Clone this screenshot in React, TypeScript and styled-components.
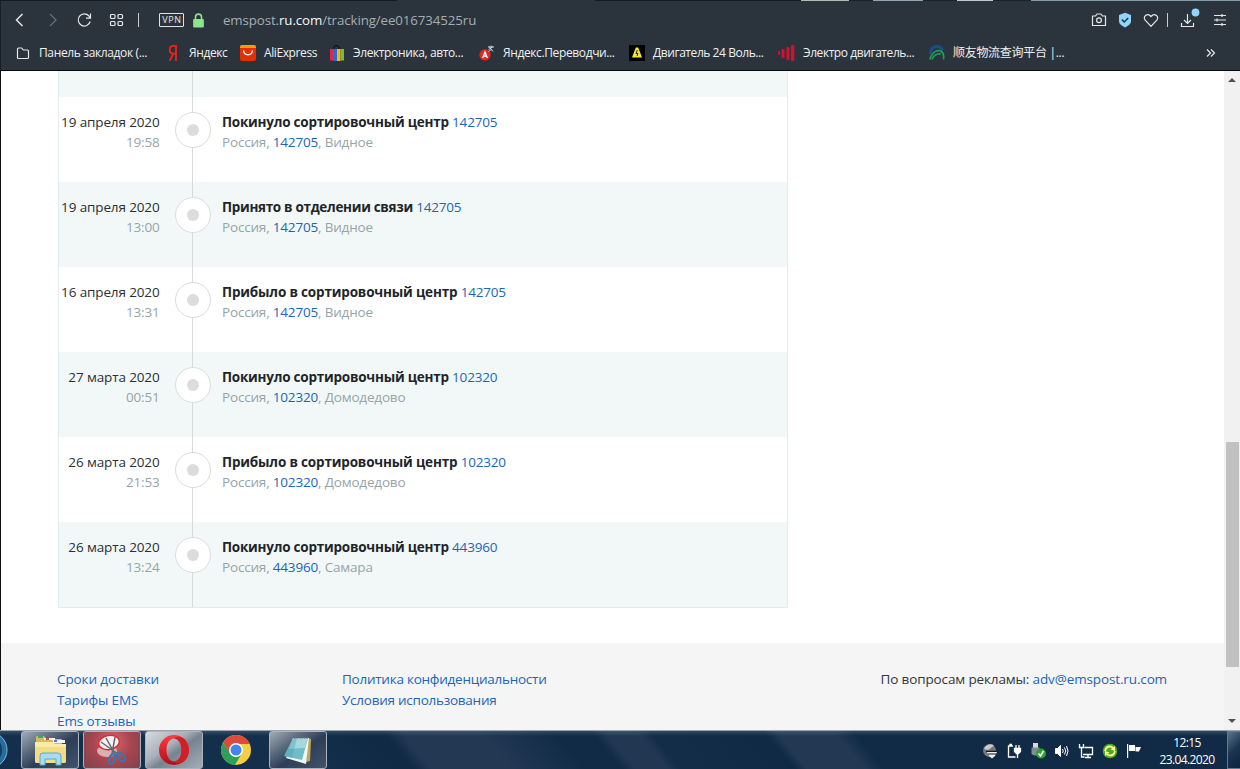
import React from 'react'
import styled, { createGlobalStyle } from 'styled-components'

const GlobalStyle = createGlobalStyle`
  * {
    box-sizing: border-box;
  }
  body {
    margin: 0;
    overflow: hidden;
    background: #fff;
  }
  svg {
    display: block;
    flex: none;
  }
`

const Screen = styled.div`
  width: 1240px;
  height: 769px;
  display: flex;
  flex-direction: column;
  overflow: hidden;
  font-family: 'Open Sans', 'Noto Sans', 'Noto Sans CJK SC', sans-serif;
`

/* ---------- browser chrome ---------- */

const Chrome = styled.header`
  height: 71px;
  flex: none;
  display: flex;
  flex-direction: column;
  background: #2b343c;
  border-left: 1px solid #171e25;
  border-bottom: 1px solid #07090b;
`

const TabEdge = styled.div`
  height: 1px;
  display: flex;
  background: #111a26;
`

const TabPiece = styled.span<{ w: number; color: string }>`
  width: ${({ w }) => w}px;
  background: ${({ color }) => color};
`

const Toolbar = styled.div`
  height: 38px;
  display: flex;
  align-items: center;
  padding: 0 12px 0 11px;
`

const NavButtons = styled.div`
  display: flex;
  align-items: center;
  width: 147px;
  gap: 16px;
`

const Vpn = styled.span`
  width: 25px;
  height: 14px;
  border: 1px solid #dfe3e6;
  border-radius: 1px;
  color: #e4e8ea;
  font-size: 9px;
  line-height: 12px;
  letter-spacing: 0.7px;
  text-align: center;
  padding-left: 1px;
`

const Address = styled.div`
  flex: 1;
  display: flex;
  align-items: center;
  gap: 18px;
  padding-left: 8px;
  font-size: 13.3px;
  line-height: 20px;
  letter-spacing: -0.1px;
  color: #a5adb3;
  white-space: nowrap;
  b {
    font-weight: 500;
    color: #f6f8f9;
  }
`

const Tools = styled.div`
  display: flex;
  align-items: center;
`

const Tool = styled.span<{ w: number }>`
  width: ${({ w }) => w}px;
  display: flex;
`

const Separator = styled.span`
  width: 1px;
  height: 14px;
  background: #c8cdd1;
`

const NavSeparator = styled(Separator)`
  margin-left: -2px;
`

const Bookmarks = styled.div`
  height: 28px;
  display: flex;
  align-items: center;
  padding-left: 14px;
`

const Bookmark = styled.div<{ w: number }>`
  width: ${({ w }) => w}px;
  display: flex;
  align-items: center;
  gap: 8px;
`

const BookmarkText = styled.span<{ spacing: number }>`
  font-size: 12px;
  line-height: 18px;
  letter-spacing: ${({ spacing }) => spacing}px;
  color: #eef1f3;
  white-space: nowrap;
`

/* ---------- page ---------- */

const Viewport = styled.div`
  height: 659px;
  flex: none;
  display: flex;
  border-left: 1px solid #111;
  background: #fff;
`

const Page = styled.main`
  flex: 1;
  display: flex;
  flex-direction: column;
  overflow: hidden;
`

const Timeline = styled.section`
  width: 730px;
  margin: 0 0 35px 57px;
  border: 1px solid #e3ecec;
  border-top: 0;
`

const Row = styled.div<{ tinted: boolean; cut?: boolean }>`
  height: ${({ cut }) => (cut ? 26 : 85)}px;
  display: grid;
  grid-template-columns: 101px 62px 1fr;
  background: ${({ tinted }) => (tinted ? '#f2f8f8' : '#fff')};
`

const When = styled.div`
  padding: 15px 0.5px 0 0;
  text-align: right;
  font-size: 13.5px;
  line-height: 20px;
  letter-spacing: -0.13px;
  color: #2b2f33;
  white-space: nowrap;
`

const Time = styled.div`
  letter-spacing: -0.2px;
  color: #95a5a6;
`

const Track = styled.div`
  display: flex;
  flex-direction: column;
  align-items: center;
  padding: 0 3px;
  margin-right: -3px;
`

const Line = styled.span<{ h?: number }>`
  width: 1px;
  ${({ h }) => (h ? `height: ${h}px;` : 'flex: 1;')}
  margin-right: 1px;
  background: #d6dada;
`

const Ring = styled.span`
  width: 36px;
  height: 36px;
  flex: none;
  display: grid;
  place-items: center;
  border: 1px solid #dcdcdc;
  border-radius: 50%;
  background: #fff;
  &::after {
    content: '';
    width: 12px;
    height: 12px;
    border-radius: 50%;
    background: #dcdcdc;
  }
`

const Info = styled.div`
  padding-top: 15px;
  font-size: 13.5px;
  line-height: 20px;
  letter-spacing: -0.18px;
  color: #95a5a6;
  white-space: nowrap;
`

const Title = styled.div<{ spacing: number }>`
  color: #212529;
  b {
    font-weight: 700;
    letter-spacing: ${({ spacing }) => spacing}px;
  }
`

const A = styled.a`
  color: #1a66b8;
  text-decoration: none;
`

const Footer = styled.footer`
  flex: 1;
  display: flex;
  padding: 26px 57px 0 56px;
  background: #f5f5f5;
  font-size: 13.5px;
  line-height: 21px;
  color: #33373b;
  white-space: nowrap;
`

const FooterColumn = styled.div<{ w?: number; spacing: number }>`
  display: flex;
  flex-direction: column;
  letter-spacing: ${({ spacing }) => spacing}px;
  ${({ w }) => (w ? `width: ${w}px;` : 'margin-left: auto;')}
`

const Scrollbar = styled.div`
  width: 16px;
  display: flex;
  flex-direction: column;
  align-items: center;
  background: #f1f1f1;
  padding: 7px 0 7px;
`

const Arrow = styled.span<{ down?: boolean }>`
  border: 4px solid transparent;
  border-top-width: ${({ down }) => (down ? 4 : 0)}px;
  border-bottom-width: ${({ down }) => (down ? 0 : 4)}px;
  border-${({ down }) => (down ? 'top' : 'bottom')}-color: #505050;
`

const Thumb = styled.span`
  width: 13px;
  height: 225px;
  margin: 360px 0 auto 1px;
  background: #c1c1c1;
`

/* ---------- taskbar ---------- */

const Taskbar = styled.footer`
  height: 39px;
  flex: none;
  display: flex;
  border-top: 1px solid #9aa5b1;
  background:
    linear-gradient(180deg, rgba(255, 255, 255, 0.14), transparent 5px),
    linear-gradient(50deg, #132f4c 26%, #102944 32.5%, #233853 34% 40%, #112b47 46% 49%, #223852 50% 52.5%, #132d49 53.5%, #102944 62.5%, #233853 63.5% 68%, #112b46 69.5%);
`

const Orb = styled.span`
  width: 21px;
  overflow: hidden;
`

const TaskButton = styled.span<{ look: 'plain' | 'red' | 'active' | 'none' }>`
  width: 58px;
  height: 38px;
  margin-right: 4px;
  display: grid;
  place-items: center;
  border: 1px solid ${({ look }) => (look === 'none' ? 'transparent' : '#a9b2bd')};
  border-radius: 3px;
  background: ${({ look }) =>
    ({
      plain: 'linear-gradient(145deg, #a3acb7 0%, #5f6e80 30%, #2c3f57 55%, #42536a 100%)',
      red: 'radial-gradient(circle at 50% 30%, #d9686d, #a8454f 50%, #85434f 90%)',
      active: 'linear-gradient(145deg, #d6dade 0%, #a7afb8 40%, #77838f 55%, #a3adb7 100%)',
      none: 'transparent',
    })[look]};
`

const Tray = styled.div`
  margin-left: auto;
  display: flex;
  align-items: center;
  gap: 8px;
  padding: 2px 16px 0 0;
`

const Clock = styled.div`
  width: 58px;
  margin-right: 11px;
  padding-top: 3px;
  text-align: center;
  font-size: 12px;
  line-height: 17px;
  letter-spacing: -0.6px;
  color: #fff;
  white-space: nowrap;
`

const ShowDesktop = styled.span`
  width: 13px;
  border: 1px solid #66788c;
  border-right: 0;
  background: linear-gradient(135deg, #60748b, #1b3450 50%, #0e2440);
`

/* ---------- icons ---------- */

interface StrokeProps {
  w: number
  h: number
  color?: string
  children: React.ReactNode
}

const Stroke = ({ w, h, color = '#e4e8ea', children }: StrokeProps) => (
  <svg width={w} height={h} viewBox={`0 0 ${w} ${h}`} fill="none" stroke={color} strokeWidth="1.2">
    {children}
  </svg>
)

const FolderIcon = () => (
  <Stroke w={16} h={16}>
    <path d="M3.500 3h3.200l1.600 2h4.200q1 0 1 1v6.500q0 1-1 1h-9q-1 0-1-1V4q0-1 1-1z" />
  </Stroke>
)

const YandexIcon = () => (
  <Stroke w={16} h={16} color="#e1251b">
    <path d="M11 16V.8H8.700C6.100.8 4.700 2.600 4.700 4.800c0 2.400 1.500 4 4 4H11M8.100 9 4.500 16" strokeWidth="1.9" />
  </Stroke>
)

const AliIcon = () => (
  <svg width="16" height="16" viewBox="0 0 16 16">
    <rect width="16" height="16" rx="2" fill="#e62e04" />
    <path d="M0 2a2 2 0 0 1 2-2h12a2 2 0 0 1 2 2v1H0z" fill="#ff9900" />
    <path d="M3.700 6c.6 5 8 5 8.600 0" fill="none" stroke="#fff" strokeWidth="1.4" strokeLinecap="round" />
  </svg>
)

const EbayIcon = () => (
  <svg width="16" height="18" viewBox="0 0 16 18">
    <path d="M5 5V3q2.500-3 5 0v2" fill="none" stroke="#12171c" strokeWidth="1.3" />
    <path d="M1 5h4v11.500H1z" fill="#dc2a4b" />
    <path d="M4.500 5H8v12H4.500z" fill="#2d6bd1" />
    <path d="M8 5h3.500v12H8z" fill="#f3b51b" />
    <path d="M11.500 5H15v11.500h-3.500z" fill="#84b72d" />
  </svg>
)

const TranslateIcon = () => (
  <svg width="16" height="16" viewBox="0 0 16 16">
    <circle cx="6" cy="10" r="5.7" fill="#e52620" />
    <path d="m3.600 13 2.400-6 2.400 6M4.500 11h3" fill="none" stroke="#fff" strokeWidth="1.3" />
    <path d="M9 2h6M12 .5V2m-2.500 2.500L14 1.500m-4 0 4 5M9.500 6.500 13 4" fill="none" stroke="#d9dde0" strokeWidth=".9" />
  </svg>
)

const MotorIcon = () => (
  <svg width="16" height="16" viewBox="0 0 16 16">
    <rect width="16" height="16" fill="#030303" />
    <path d="M6.800 2.500h2.400L13 12.500H3z" fill="#f5e83b" />
    <path d="M8.300 5 7 8.500h2l-1 2.500" fill="none" stroke="#111" strokeWidth=".9" />
  </svg>
)

const BarsIcon = () => (
  <svg width="17" height="16" viewBox="0 0 17 16" fill="#d70f2e">
    <rect x="0" y="6" width="2" height="4" rx="1" />
    <rect x="3.500" y="4" width="3" height="9" rx="1" />
    <rect x="8.500" y="2" width="3" height="13" rx="1" />
    <rect x="13" y="0" width="3.300" height="16" rx="1" />
  </svg>
)

const SunyouIcon = () => (
  <svg width="16" height="16" viewBox="0 0 16 16" fill="none">
    <path d="M1.500 9C1.500 1 10-1 13.500 5" stroke="#1c4d84" strokeWidth="3" />
    <path d="M.8 14.500C3 7 8 4.500 12 6c2.500 1.500 3 5 2.500 8.500M3 14.500c1.500-4 4.500-6 9-5.500" stroke="#219b57" strokeWidth="1.7" />
  </svg>
)

const LockIcon = () => (
  <svg width="13" height="15" viewBox="0 0 12 14">
    <path d="M3.200 7V3.800a2.800 2.800 0 0 1 5.600 0V7" fill="none" stroke="#8de58b" strokeWidth="1.5" />
    <rect x="1" y="5.500" width="10" height="8" rx="1" fill="#8de58b" />
  </svg>
)

const ExplorerIcon = () => (
  <svg width="36" height="34" viewBox="0 0 36 34">
    <path d="M4 4q0-1 1-1h7l2 3h15q1 0 1 1v20H4z" fill="#d9b95c" />
    <path d="M6 3h5v2H6z" fill="#3aa866" />
    <path d="M12 5h11v2H12z" fill="#f7f3df" />
    <path d="M14 5h3v2h-3z" fill="#d44b39" />
    <path d="M21 7h12v3H21z" fill="#f4f7f5" />
    <path d="M22 7h3v2h-3z" fill="#3b83c4" />
    <path d="M3 9h17l3 2h11v17q0 2-2 2H5q-2 0-2-2z" fill="#f9ebaa" />
    <path d="M3 14h31v14q0 2-2 2H5q-2 0-2-2z" fill="#f3dc83" />
    <path d="M8 32V23q0-3 3-3h15q3 0 3 3v9h-5v-6H13v6z" fill="#a7dcf3" stroke="#5ca8d4" />
  </svg>
)

const SnipIcon = () => (
  <svg width="34" height="34" viewBox="0 0 34 34">
    <ellipse cx="12" cy="18" rx="10" ry="6" fill="#dbb0b3" />
    <ellipse cx="14" cy="9.500" rx="10.500" ry="7" fill="#f4f2f3" stroke="#db2e34" strokeWidth="1.5" transform="rotate(-10 14 9.500)" />
    <path d="m11 5 9 16M20 4l-3 17M6 9l17 12" stroke="#5f6973" strokeWidth="1.5" />
    <ellipse cx="17" cy="26" rx="2.600" ry="5" fill="none" stroke="#3d74ac" strokeWidth="2.2" transform="rotate(20 17 26)" />
    <ellipse cx="26" cy="24" rx="2.600" ry="5" fill="none" stroke="#3d74ac" strokeWidth="2.2" transform="rotate(-40 26 24)" />
  </svg>
)

const OperaIcon = () => (
  <svg width="32" height="32" viewBox="0 0 32 32">
    <defs>
      <linearGradient id="opera" x1="0" x2="0" y1="0" y2="1">
        <stop offset="0" stopColor="#ff3b44" />
        <stop offset="1" stopColor="#b30c12" />
      </linearGradient>
    </defs>
    <path
      fillRule="evenodd"
      fill="url(#opera)"
      d="M16 1a15 15 0 1 0 0 30 15 15 0 0 0 0-30zm0 3.500c4.500 0 7.500 5 7.500 11.500s-3 11.500-7.500 11.500S8.500 22.500 8.500 16 11.500 4.500 16 4.500z"
    />
    <path d="M16 4.500c4.500 0 7.500 5 7.500 11.500s-3 11.500-7.500 11.500c4 3 9 1 11-1 5-6 5-15 0-21-3-3-8-4-11-1z" fill="#d41e25" />
  </svg>
)

const ChromeIcon = () => (
  <svg width="32" height="32" viewBox="0 0 32 32">
    <circle cx="16" cy="16" r="15" fill="#f7cd46" />
    <path d="M3 8.500A15 15 0 0 1 29 8.500L29.500 10H16l-6 9z" fill="#dc4a3d" />
    <path d="M3 8.500a15 15 0 0 0 12 22.500l7-12-6 4-6-4z" fill="#2f9e58" />
    <circle cx="16" cy="16" r="7" fill="#fff" />
    <circle cx="16" cy="16" r="5.500" fill="#4384ee" />
  </svg>
)

const NotesIcon = () => (
  <svg width="34" height="32" viewBox="0 0 34 32">
    <path d="m27 4 3 1-1 22-4 1z" fill="#c7a552" />
    <path d="M14 4h14l-3 26-20-6z" fill="#eef6f7" />
    <path d="M12 4h15l-6 22L3 22z" fill="#6fbccb" />
    <path d="M12 4h15l-3 10-16 1z" fill="#a5d7de" />
    <path d="m12 4-9 18 8 2 5-20z" fill="#4a97ab" opacity=".35" />
    <path d="M13 3.500h15" stroke="#5b6e78" strokeWidth="2" strokeDasharray="1.500 1" />
  </svg>
)

const TrayIcons = () => (
  <>
    <svg width="16" height="16" viewBox="0 0 16 16">
      <circle cx="7.500" cy="7.500" r="6.500" fill="#77797c" />
      <path d="M2 6a6.500 6.500 0 0 1 10-3.500L6 7z" fill="#c9cbcc" />
      <path d="M5 9h10l-2 4-3 2.500L7 13z" fill="#efefef" />
      <path d="M6 11h8M4 8.300h11" stroke="#171717" strokeWidth="1.2" />
    </svg>
    <svg width="16" height="16" viewBox="0 0 16 16" fill="none" stroke="#fff" strokeWidth="1.3">
      <path d="M7 3H2.500v11h7M4 3V1.500h2M10 2v4m3-4v4m-1.500 4v5" />
      <path d="M8.500 5.500h6v3l-2 2h-2l-2-2z" fill="#fff" />
    </svg>
    <svg width="16" height="16" viewBox="0 0 16 16">
      <path d="M3 0h5v5H3z" fill="#d6d8db" />
      <path d="M1.500 4.500h8V11q-4 3-8 0z" fill="#858b92" />
      <circle cx="11" cy="10.500" r="5" fill="#2ba52e" />
      <path d="m8.500 10.500 2 2.500 3-5" stroke="#fff" strokeWidth="1.5" fill="none" />
    </svg>
    <svg width="16" height="16" viewBox="0 0 16 16" fill="none" stroke="#fff">
      <path d="M1.500 5.500h2L6.500 2.500v11l-3-3h-2z" fill="#fff" />
      <path d="M8.500 6q1.500 2 0 4M10.500 4.500q2.500 3.500 0 7M12.500 3q3 5 0 10" />
    </svg>
    <svg width="16" height="16" viewBox="0 0 16 16" fill="none" stroke="#fff" strokeWidth="1.3">
      <path d="M6.500 4.500h8v7H5M7 14.500h6M10 11.500v3M1.500 1v3.500h4V1M3.500 4.500V14h3" />
    </svg>
    <svg width="16" height="16" viewBox="0 0 16 16">
      <circle cx="8" cy="8" r="7.300" fill="#48a91e" />
      <path d="M3 8q1-4.500 5-4.500 2 0 3 1.500M13 8q-1 4.500-5 4.500-2 0-3-1.500" stroke="#fff49a" strokeWidth="1.8" fill="none" />
      <path d="M13 3v5L8.500 6.500zM3 13V8l4.500 1.500z" fill="#fff49a" />
    </svg>
    <svg width="16" height="16" viewBox="0 0 16 16" fill="#fff">
      <path d="M1 1h1.200v14H1zM3 2h6v6H3zM9.500 4H15l-2 4.500H9.500z" />
    </svg>
  </>
)

/* ---------- data ---------- */

const bookmarks = [
  { text: 'Панель закладок (...', icon: <FolderIcon />, w: 150, spacing: -0.37 },
  { text: 'Яндекс', icon: <YandexIcon />, w: 75, spacing: -0.4 },
  { text: 'AliExpress', icon: <AliIcon />, w: 89, spacing: -0.4 },
  { text: 'Электроника, авто...', icon: <EbayIcon />, w: 150, spacing: -0.38 },
  { text: 'Яндекс.Переводчи...', icon: <TranslateIcon />, w: 150, spacing: -0.38 },
  { text: 'Двигатель 24 Воль...', icon: <MotorIcon />, w: 149, spacing: -0.44 },
  { text: 'Электро двигатель...', icon: <BarsIcon />, w: 151, spacing: -0.43 },
  { text: '顺友物流查询平台 |...', icon: <SunyouIcon />, w: 277, spacing: -0.3 },
]

const LEFT = { title: 'Покинуло сортировочный центр', spacing: -0.23 }
const ARRIVED = { title: 'Прибыло в сортировочный центр', spacing: -0.17 }
const ACCEPTED = { title: 'Принято в отделении связи', spacing: -0.31 }

const events = [
  { date: '19 апреля 2020', time: '19:58', status: LEFT, index: '142705', city: 'Видное' },
  { date: '19 апреля 2020', time: '13:00', status: ACCEPTED, index: '142705', city: 'Видное' },
  { date: '16 апреля 2020', time: '13:31', status: ARRIVED, index: '142705', city: 'Видное' },
  { date: '27 марта 2020', time: '00:51', status: LEFT, index: '102320', city: 'Домодедово' },
  { date: '26 марта 2020', time: '21:53', status: ARRIVED, index: '102320', city: 'Домодедово' },
  { date: '26 марта 2020', time: '13:24', status: LEFT, index: '443960', city: 'Самара' },
]

const App = () => {
  return (
    <Screen>
      <GlobalStyle />
      <Chrome>
        <TabEdge>
          <TabPiece w={396} color="#111a26" />
          <TabPiece w={198} color="#2b343c" />
          <TabPiece w={206} color="#111a26" />
          <TabPiece w={48} color="#a9bdb2" />
          <TabPiece w={24} color="#17232e" />
          <TabPiece w={50} color="#8fa5b3" />
          <TabPiece w={34} color="#17232e" />
          <TabPiece w={36} color="#b9cbd4" />
          <TabPiece w={38} color="#17232e" />
          <TabPiece w={209} color="#829cac" />
        </TabEdge>
        <Toolbar>
          <NavButtons>
            <Stroke w={16} h={16}><path d="M10.500 2 4.500 8l6 6" strokeWidth="1.5" /></Stroke>
            <Stroke w={16} h={16} color="#65707a"><path d="m6 2 6 6-6 6" /></Stroke>
            <Stroke w={16} h={16}>
              <path d="M14.200 9.500A6.100 6.100 0 1 1 13 4l1.200 1.800M14.500 1.500v4.700H10" />
            </Stroke>
            <Stroke w={16} h={16}>
              <rect x="2.500" y="2.500" width="4.500" height="4" rx="1" />
              <rect x="10" y="2.500" width="4.500" height="4" rx="1" />
              <rect x="2.500" y="9.500" width="4.500" height="4" rx="1" />
              <rect x="10" y="9.500" width="4.500" height="4" rx="1" />
            </Stroke>
            <NavSeparator />
          </NavButtons>
          <Vpn>VPN</Vpn>
          <Address>
            <LockIcon />
            <span>emspost.<b>ru.com</b>/tracking/ee016734525ru</span>
          </Address>
          <Tools>
            <Tool w={26}>
              <Stroke w={16} h={16}>
                <path d="M1.500 4h3L6 2h4l1.500 2h3v9.500h-13z" strokeLinejoin="round" />
                <circle cx="8" cy="8.300" r="2.400" />
              </Stroke>
            </Tool>
            <Tool w={26}>
              <svg width="16" height="16" viewBox="0 0 16 16">
                <path d="M8 .8 14 3v6.500q0 3-6 6-6-3-6-6V3z" fill="#8fd4fb" />
                <path d="m4.800 7.500 2.400 2.500 4-4" fill="none" stroke="#26323c" strokeWidth="1.5" />
              </svg>
            </Tool>
            <Tool w={24}>
              <Stroke w={16} h={16}>
                <path d="M8 14.300 2.200 8.200C-.4 4.500 4.500.2 8 4.500c3.500-4.300 8.400 0 5.800 3.700z" />
              </Stroke>
            </Tool>
            <Tool w={11}><Separator /></Tool>
            <Tool w={34}>
              <Stroke w={22} h={24}>
                <path d="M3.500 15v3.500h12V15M9.500 6v9.500M6 12l3.500 3.500L13 12" />
                <circle cx="17.500" cy="4.500" r="3.900" fill="#8fd4fb" stroke="none" />
              </Stroke>
            </Tool>
            <Stroke w={16} h={16}>
              <path d="M2 3.500h12M2 8h12M2 12.500h12M10 2v3M5 6.500v3M10 11v3" />
            </Stroke>
          </Tools>
        </Toolbar>
        <Bookmarks>
          {bookmarks.map((item) => (
            <Bookmark key={item.text} w={item.w}>
              {item.icon}
              <BookmarkText spacing={item.spacing}>{item.text}</BookmarkText>
            </Bookmark>
          ))}
          <Stroke w={10} h={10}><path d="m1 1.500 3.500 3.500L1 8.500M5 1.500 8.500 5 5 8.500" /></Stroke>
        </Bookmarks>
      </Chrome>

      <Viewport>
        <Page>
          <Timeline>
            <Row tinted cut>
              <span />
              <Track><Line /></Track>
            </Row>
            {events.map((event, i) => (
              <Row key={i} tinted={i % 2 === 1}>
                <When>
                  {event.date}
                  <Time>{event.time}</Time>
                </When>
                <Track>
                  <Line h={15} />
                  <Ring />
                  <Line />
                </Track>
                <Info>
                  <Title spacing={event.status.spacing}>
                    <b>{event.status.title}</b> <A>{event.index}</A>
                  </Title>
                  Россия, <A>{event.index}</A>, {event.city}
                </Info>
              </Row>
            ))}
          </Timeline>
          <Footer>
            <FooterColumn w={285} spacing={-0.1}>
              <A>Сроки доставки</A>
              <A>Тарифы EMS</A>
              <A>Ems отзывы</A>
            </FooterColumn>
            <FooterColumn w={285} spacing={-0.25}>
              <A>Политика конфиденциальности</A>
              <A>Условия использования</A>
            </FooterColumn>
            <FooterColumn spacing={-0.13}>
              <span>По вопросам рекламы: <A>adv@emspost.ru.com</A></span>
            </FooterColumn>
          </Footer>
        </Page>
        <Scrollbar>
          <Arrow />
          <Thumb />
          <Arrow down />
        </Scrollbar>
      </Viewport>

      <Taskbar>
        <Orb>
          <svg width="21" height="38" viewBox="0 0 21 38">
            <circle cx="-11" cy="19" r="18" fill="#246da0" stroke="#8db4cf" />
            <circle cx="-14" cy="19" r="16" fill="#123e66" />
          </svg>
        </Orb>
        <TaskButton look="plain"><ExplorerIcon /></TaskButton>
        <TaskButton look="red"><SnipIcon /></TaskButton>
        <TaskButton look="active"><OperaIcon /></TaskButton>
        <TaskButton look="none"><ChromeIcon /></TaskButton>
        <TaskButton look="plain"><NotesIcon /></TaskButton>
        <Tray><TrayIcons /></Tray>
        <Clock>
          <div>12:15</div>
          <div>23.04.2020</div>
        </Clock>
        <ShowDesktop />
      </Taskbar>
    </Screen>
  )
}

export default App
